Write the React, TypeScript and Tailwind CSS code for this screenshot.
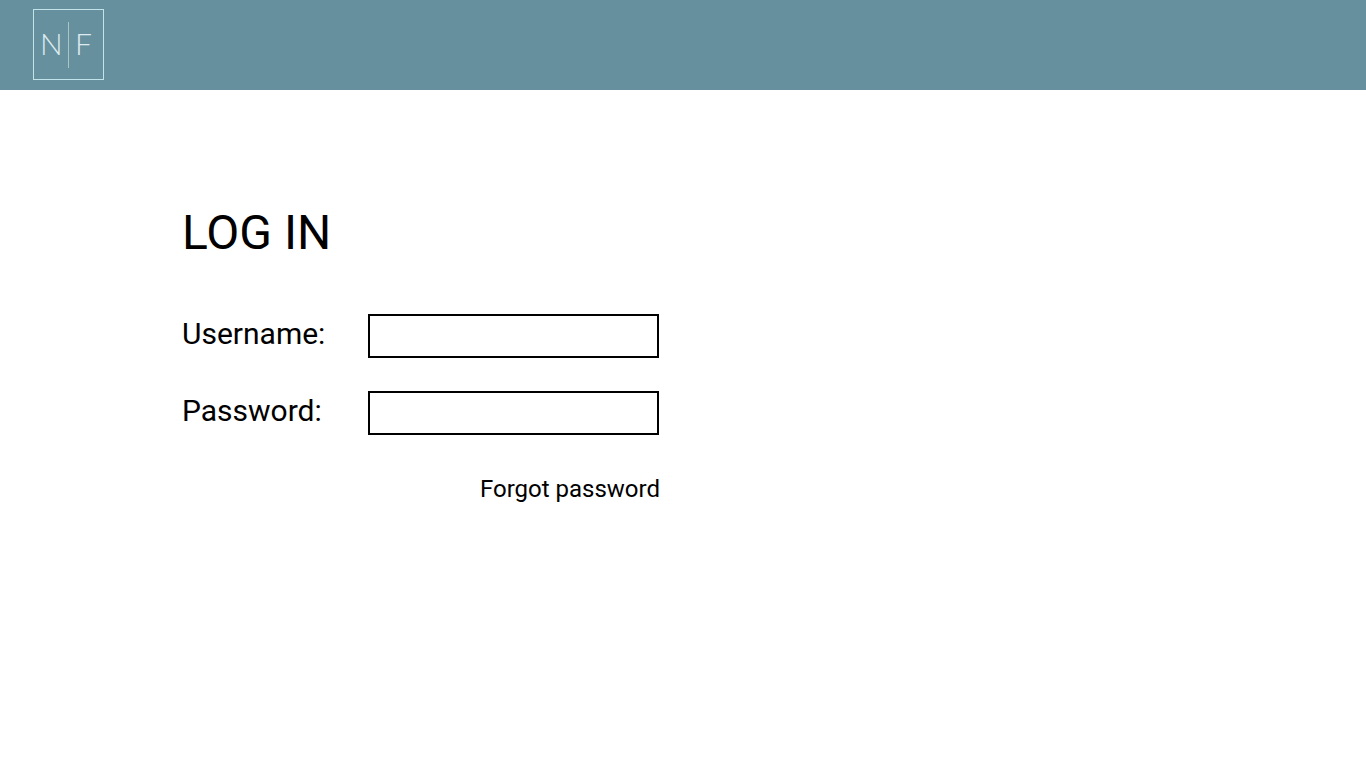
import React from "react";

function Logo() {
  return (
    <a
      href="/"
      aria-label="NF home"
      className="flex size-[71px] items-center border border-[#c3e3ea] pl-[6px] font-['Lato',sans-serif] text-[30px] leading-none font-light text-[#dcebef]"
    >
      <span className="w-7 pb-1">N</span>
      <span className="h-[46px] w-px bg-[#a9c5c5]" />
      <span className="pb-1 pl-[6px]">F</span>
    </a>
  );
}

type FieldProps = { id: string; label: string; type: string };

function Field({ id, label, type }: FieldProps) {
  return (
    <div className="flex items-center">
      <label htmlFor={id} className="w-[186px] pb-1 text-[30px] leading-9">
        {label}
      </label>
      <input
        id={id}
        name={id}
        type={type}
        className="h-11 w-[291px] border-2 border-black bg-white px-3 text-2xl outline-none"
      />
    </div>
  );
}

export default function App() {
  return (
    <div className="min-h-screen bg-white font-['Roboto',sans-serif] text-black">
      <header className="flex h-[90px] items-center bg-[#66909e] px-[33px] pb-px">
        <Logo />
      </header>
      <main className="px-[182px] pt-[115px]">
        <h1 className="text-5xl leading-14">LOG IN</h1>
        <form className="mt-[53px] flex w-[478px] flex-col gap-[33px]">
          <Field id="username" label="Username:" type="text" />
          <Field id="password" label="Password:" type="password" />
          <a href="#forgot" className="mt-[5px] self-end text-2xl leading-8">
            Forgot password
          </a>
        </form>
      </main>
    </div>
  );
}
